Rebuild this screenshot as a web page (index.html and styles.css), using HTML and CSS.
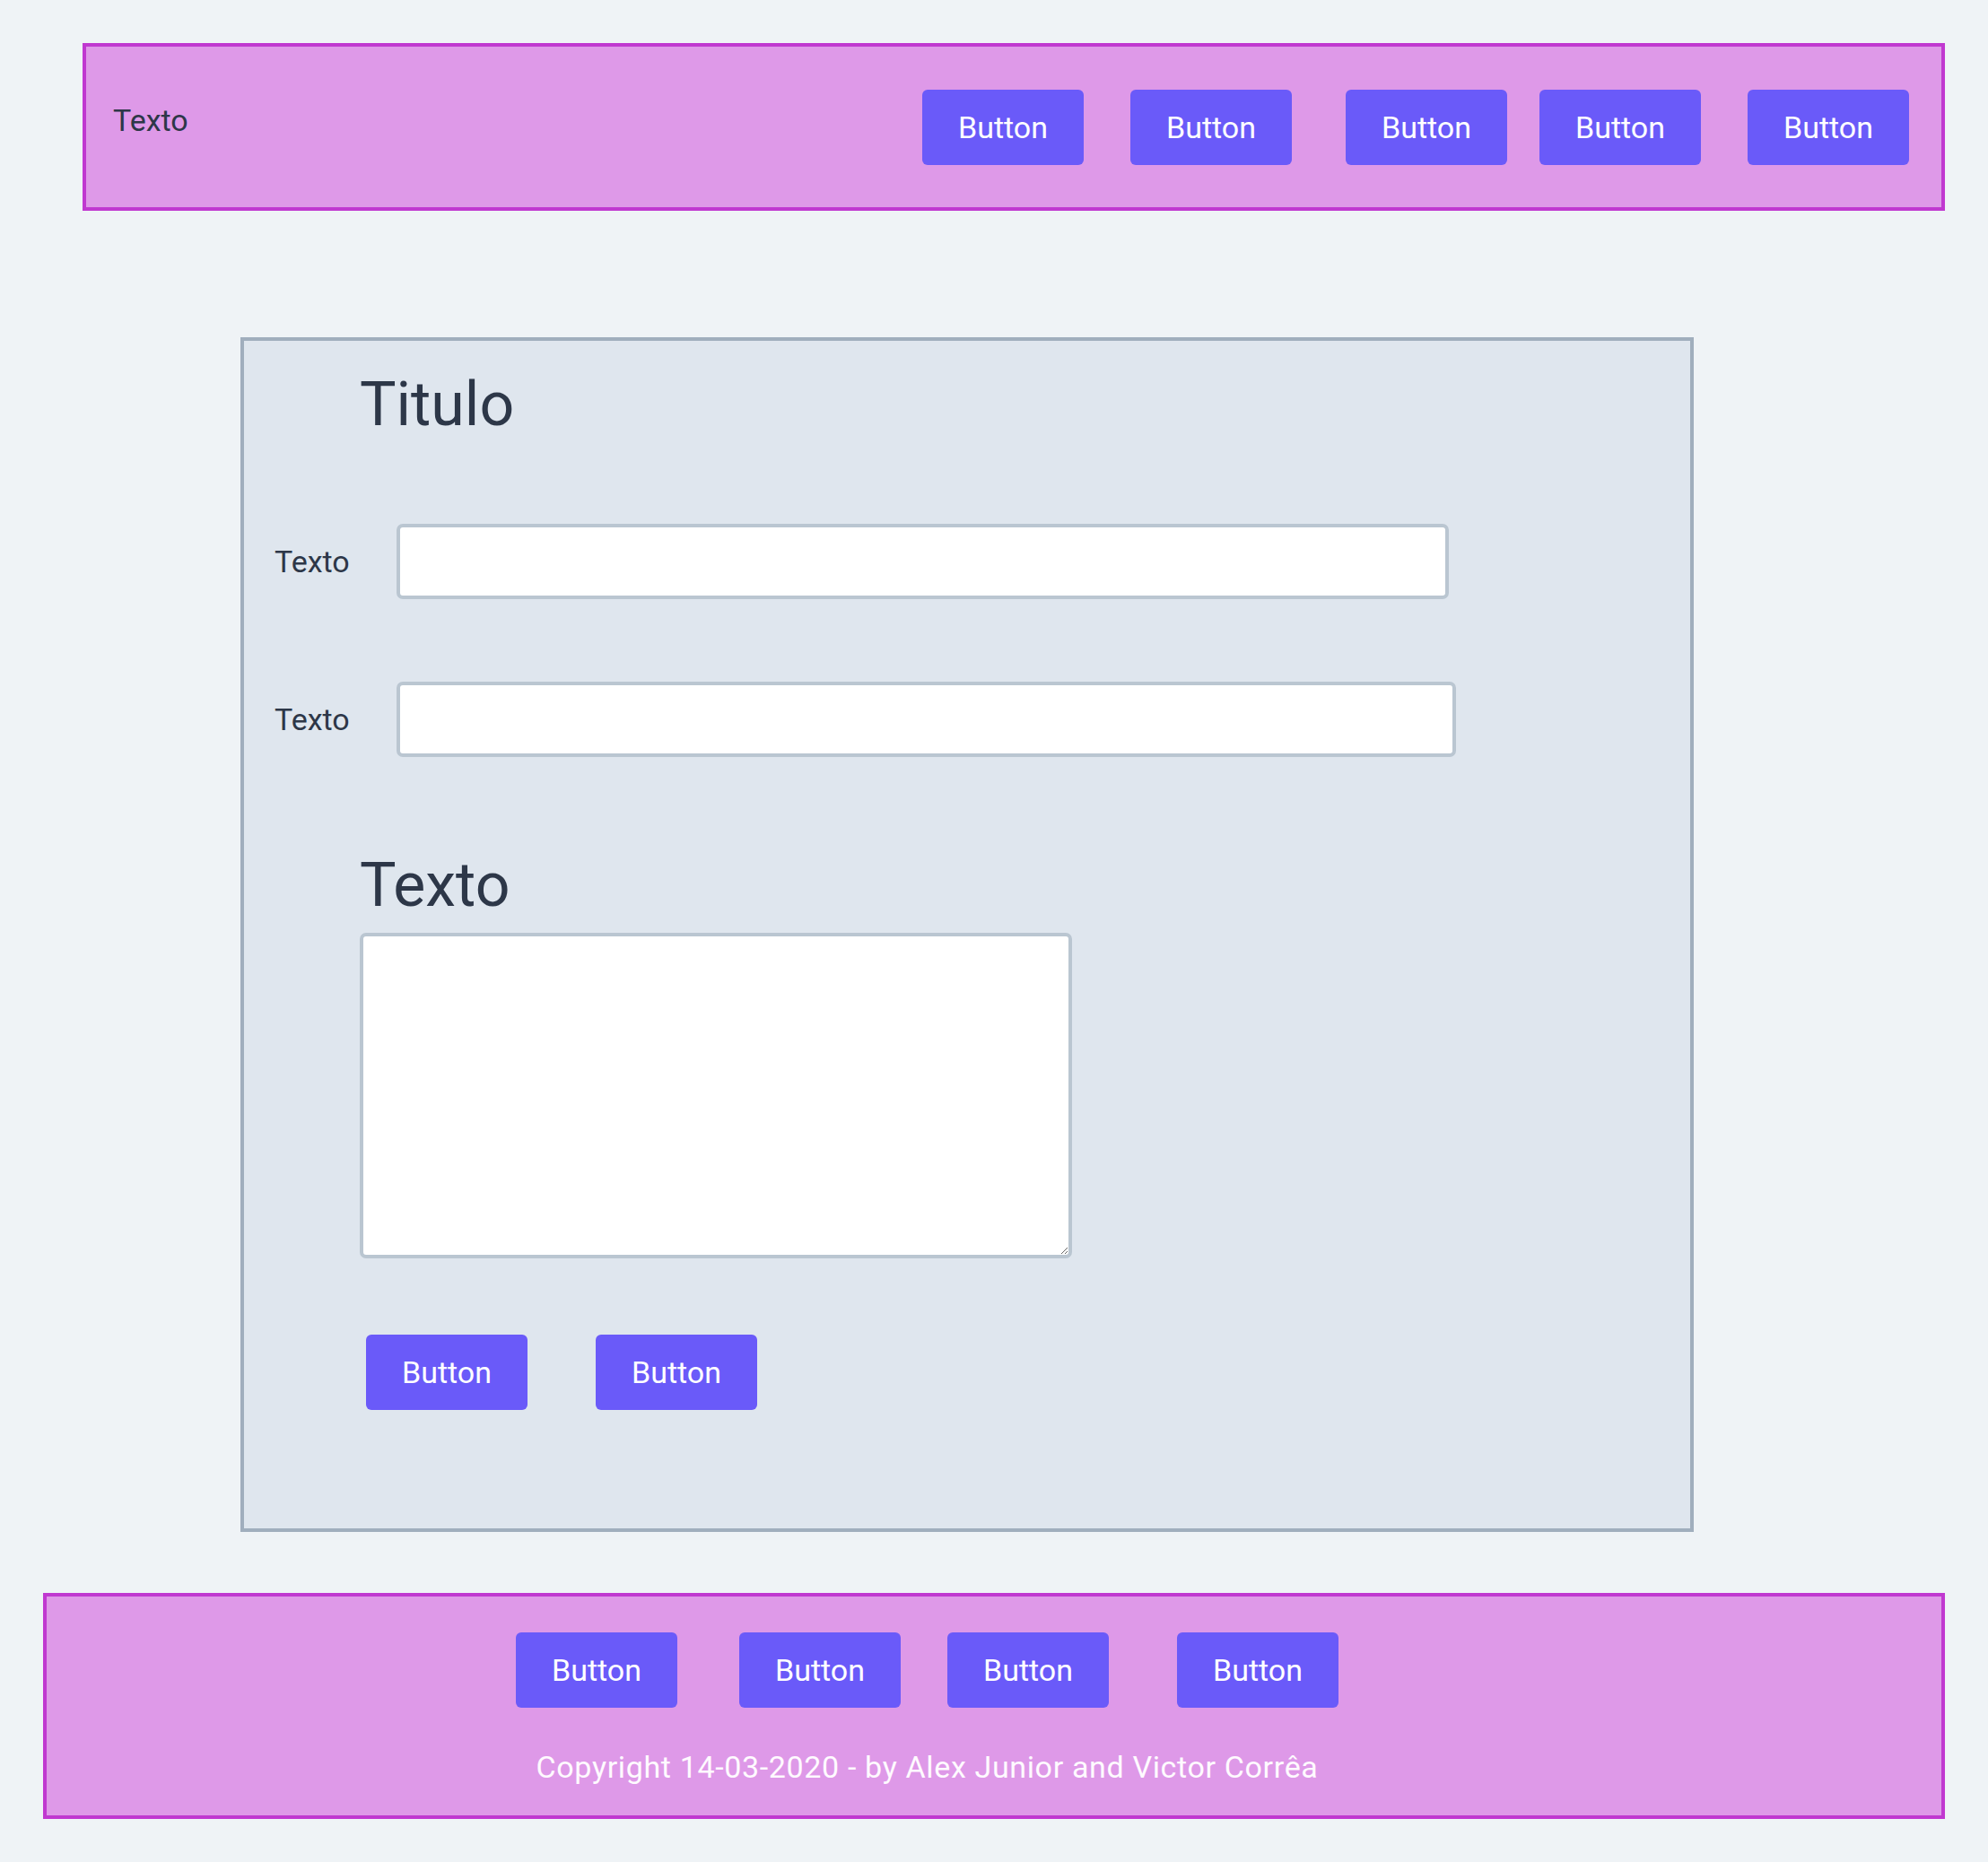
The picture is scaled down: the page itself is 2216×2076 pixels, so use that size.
FILE: index.html
```html
<!DOCTYPE html>
<html lang="pt">
<head>
<meta charset="utf-8">
<title>Formulário</title>
<link rel="stylesheet" href="styles.css">
</head>
<body>
  <header class="topbar">
    <span class="topbar-text">Texto</span>
    <nav class="topbar-nav">
      <button class="btn">Button</button>
      <button class="btn">Button</button>
      <button class="btn">Button</button>
      <button class="btn">Button</button>
      <button class="btn">Button</button>
    </nav>
  </header>

  <main class="card">
    <h1 class="card-title">Titulo</h1>
    <div class="field field-first">
      <label class="field-label">Texto</label>
      <input class="field-input field-input-a" type="text">
    </div>
    <div class="field field-second">
      <label class="field-label">Texto</label>
      <input class="field-input field-input-b" type="text">
    </div>
    <h2 class="card-subtitle">Texto</h2>
    <textarea class="card-textarea"></textarea>
    <div class="card-actions">
      <button class="btn">Button</button>
      <button class="btn">Button</button>
    </div>
  </main>

  <footer class="footbar">
    <div class="footbar-inner">
      <nav class="footbar-nav">
        <button class="btn">Button</button>
        <button class="btn">Button</button>
        <button class="btn">Button</button>
        <button class="btn">Button</button>
      </nav>
      <p class="copyright">Copyright 14-03-2020 - by Alex Junior and Victor Corrêa</p>
    </div>
  </footer>
</body>
</html>
```

FILE: styles.css
```css
* { box-sizing: border-box; }

html, body {
  margin: 0;
  padding: 0;
}

body {
  background: #eff3f6;
  font-family: Roboto, "Liberation Sans", sans-serif;
  color: #2d3748;
  padding-top: 48px;
  padding-bottom: 48px;
}

.btn {
  display: flex;
  align-items: center;
  justify-content: center;
  width: 180px;
  height: 84px;
  padding: 0;
  border: none;
  border-radius: 6px;
  background: #6a5af9;
  color: #ffffff;
  font-family: Roboto, "Liberation Sans", sans-serif;
  font-size: 34px;
  line-height: 1;
  flex: none;
}

/* ---------- header ---------- */
.topbar {
  display: flex;
  align-items: flex-start;
  margin: 0 48px 0 92px;
  height: 187px;
  padding: 48px 36px 0 30px;
  background: #de99e8;
  border: 4px solid #c038d0;
}

.topbar-text {
  font-size: 34px;
  line-height: 51px;
  margin-top: 9px;
  color: #2d3748;
}

.topbar-nav {
  display: flex;
  margin-left: auto;
}

.topbar-nav .btn:nth-child(2) { margin-left: 52px; }
.topbar-nav .btn:nth-child(3) { margin-left: 60px; }
.topbar-nav .btn:nth-child(4) { margin-left: 36px; }
.topbar-nav .btn:nth-child(5) { margin-left: 52px; }

/* ---------- card ---------- */
.card {
  display: block;
  margin: 141px 0 0 268px;
  width: 1620px;
  height: 1332px;
  padding: 31px 34px 0 34px;
  background: #dfe6ee;
  border: 4px solid #a0aebd;
}

.card-title,
.card-subtitle {
  font-size: 68px;
  font-weight: 400;
  line-height: 80px;
  margin: 0 0 0 95px;
  color: #2d3748;
}

.field {
  display: flex;
  align-items: center;
}

.field-first { margin-top: 93px; }
.field-second { margin-top: 92px; }

.field-label {
  width: 136px;
  flex: none;
  font-size: 34px;
  line-height: 51px;
  color: #2d3748;
}

.field-input {
  height: 84px;
  border: 4px solid #bac6d1;
  border-radius: 7px;
  background: #ffffff;
  font-size: 30px;
  padding: 0 16px;
  outline: none;
}

.field-input-a { width: 1173px; }
.field-input-b { width: 1181px; }

.card-subtitle {
  margin-top: 103px;
}

.card-textarea {
  display: block;
  margin: 13px 0 0 95px;
  width: 794px;
  height: 363px;
  border: 4px solid #bac6d1;
  border-radius: 7px;
  background: #ffffff;
  font-size: 30px;
  padding: 12px;
  outline: none;
}

.card-actions {
  display: flex;
  margin: 85px 0 0 102px;
}

.card-actions .btn:nth-child(2) { margin-left: 76px; }

/* ---------- footer ---------- */
.footbar {
  margin: 68px 48px 0 48px;
  height: 252px;
  padding: 40px 0 0 523px;
  background: #de99e8;
  border: 4px solid #c038d0;
}

.footbar-inner {
  width: 917px;
}

.footbar-nav {
  display: flex;
}

.footbar-nav .btn:nth-child(2) { margin-left: 69px; }
.footbar-nav .btn:nth-child(3) { margin-left: 52px; }
.footbar-nav .btn:nth-child(4) { margin-left: 76px; }

.copyright {
  margin: 41px 0 0 0;
  text-align: center;
  font-size: 34px;
  line-height: 51px;
  letter-spacing: 0.65px;
  color: #fffaff;
  white-space: nowrap;
}
```
